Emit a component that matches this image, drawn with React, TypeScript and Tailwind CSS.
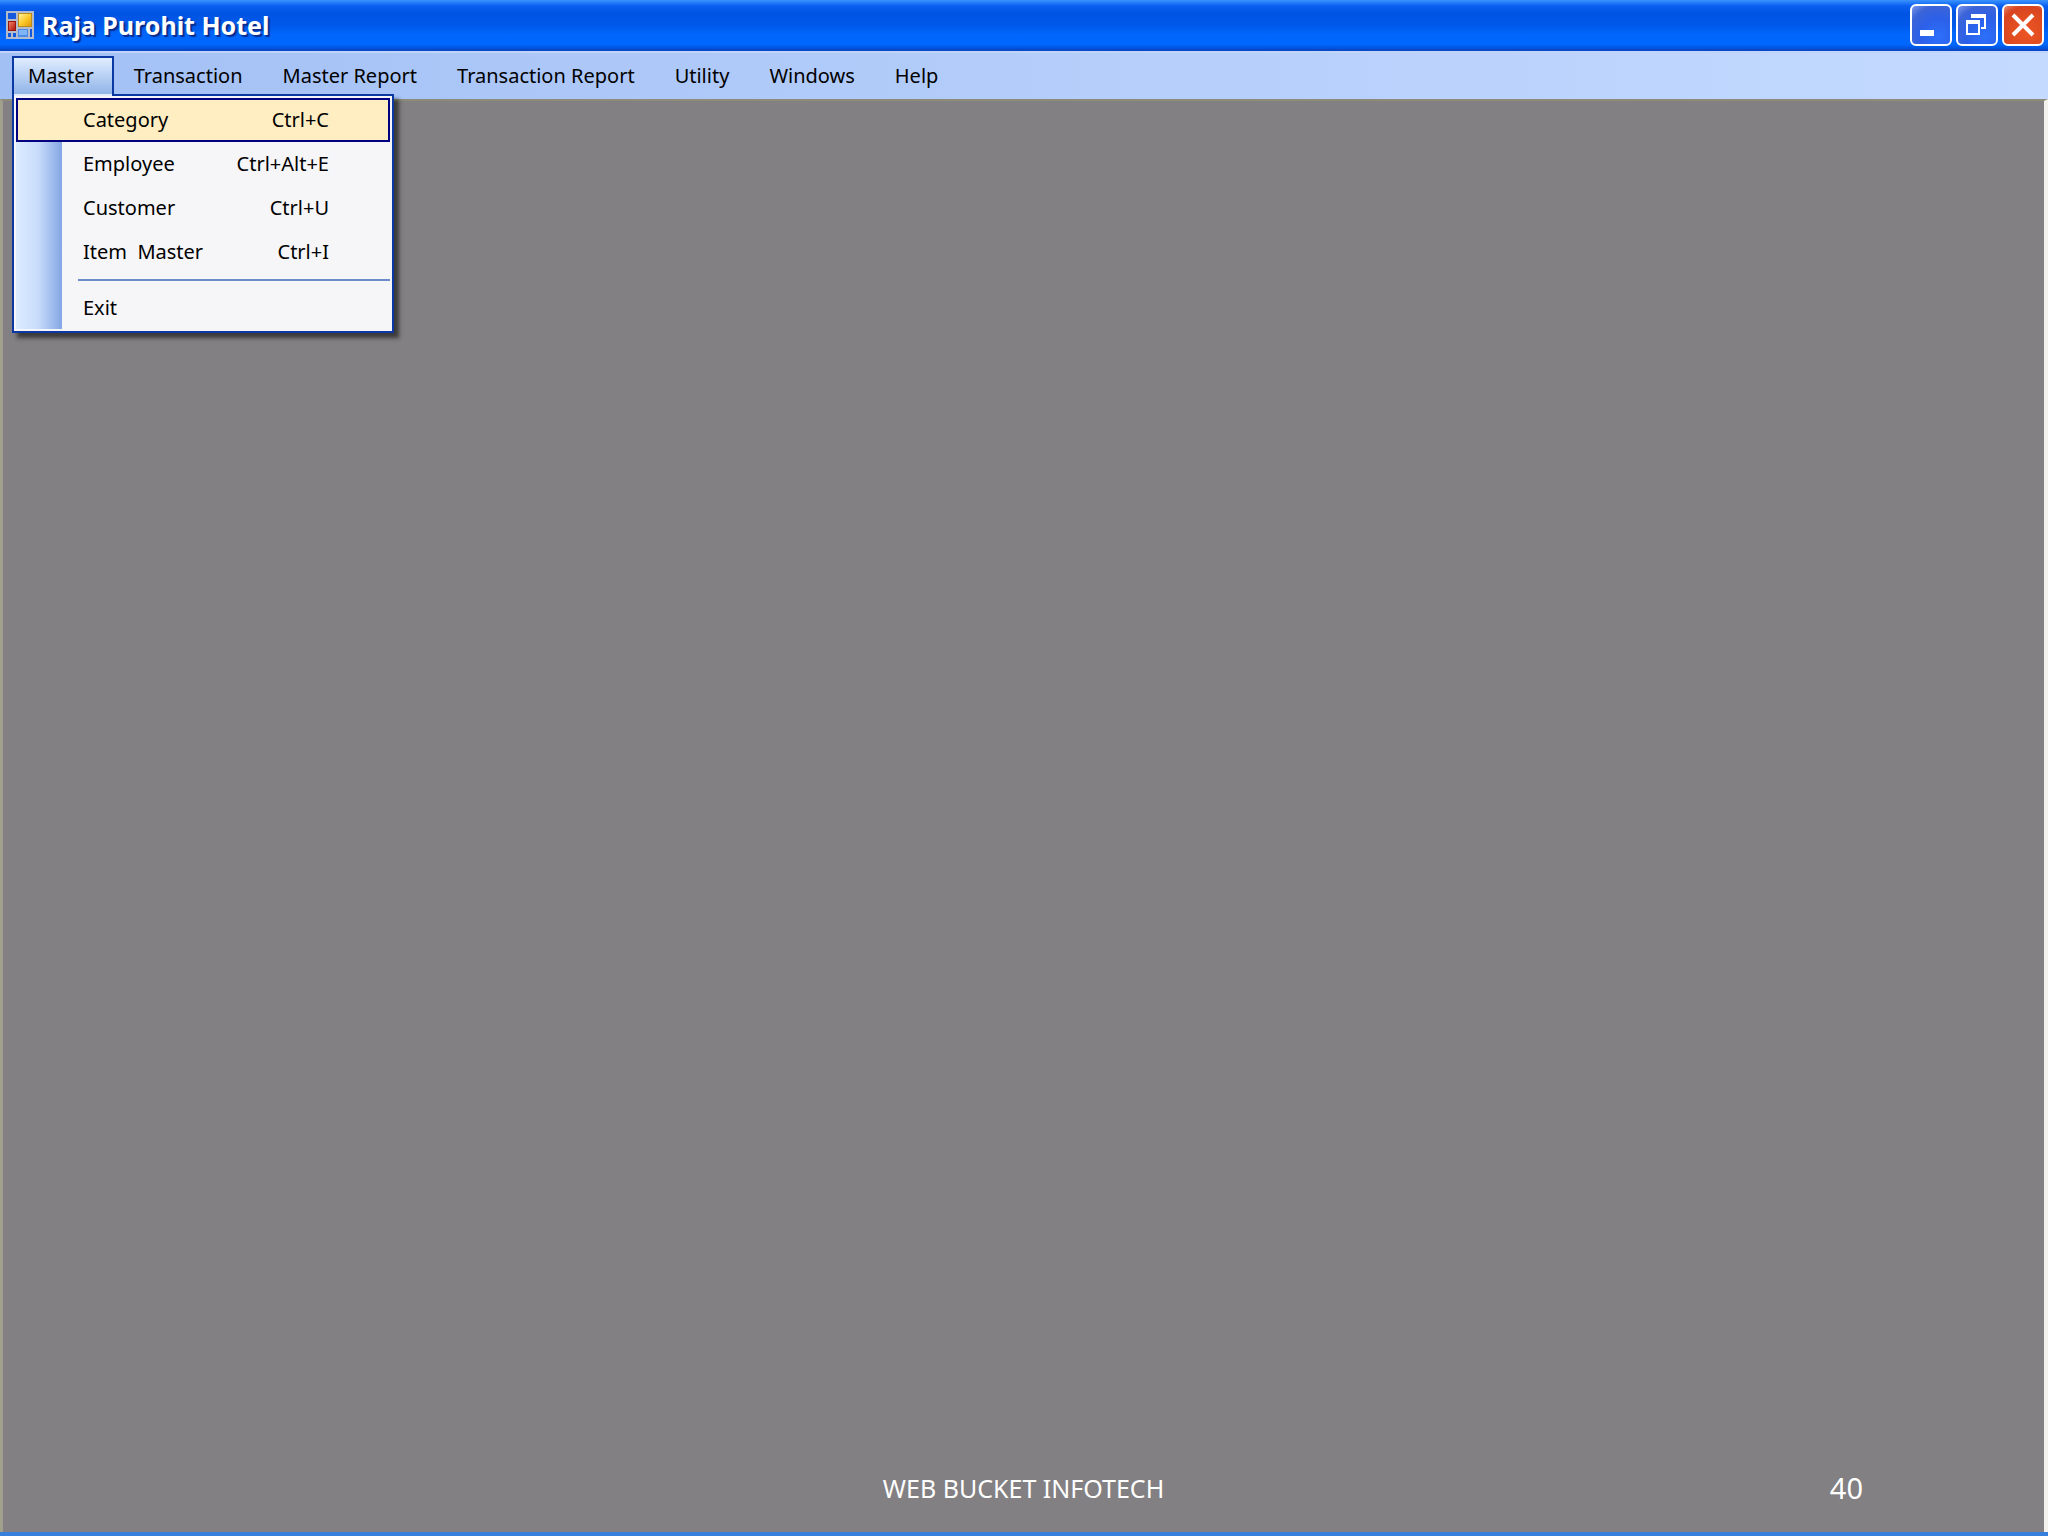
const menus = ["Master", "Transaction", "Master Report", "Transaction Report", "Utility", "Windows", "Help"]

const masterItems = [
  { label: "Category", shortcut: "Ctrl+C" },
  { label: "Employee", shortcut: "Ctrl+Alt+E" },
  { label: "Customer", shortcut: "Ctrl+U" },
  { label: "Item  Master", shortcut: "Ctrl+I" },
]

const AppIcon = () => (
  <svg width="28" height="28" viewBox="0 0 28 28" aria-hidden="true">
    <defs>
      <linearGradient id="yellow" x1="0" y1="0" x2="1" y2="1">
        <stop offset="0" stopColor="#fff3a0" />
        <stop offset="0.5" stopColor="#fcca2c" />
        <stop offset="1" stopColor="#e09a08" />
      </linearGradient>
      <linearGradient id="red" x1="0" y1="0" x2="1" y2="1">
        <stop offset="0" stopColor="#f08068" />
        <stop offset="1" stopColor="#b01408" />
      </linearGradient>
    </defs>
    <rect width="28" height="28" fill="#b4bccc" />
    <rect x="2" y="2" width="8" height="6" fill="#1458dc" />
    <rect x="12" y="2" width="14" height="14" fill="#b98a1c" />
    <rect x="13" y="3" width="12" height="12" fill="url(#yellow)" />
    <rect x="2" y="10" width="8" height="10" fill="#9c1410" />
    <rect x="3" y="11" width="6" height="8" fill="url(#red)" />
    <rect x="2" y="22" width="3" height="4" fill="#1458dc" />
    <rect x="7" y="22" width="3" height="4" fill="#1458dc" />
    <rect x="12" y="18" width="10" height="8" fill="#4c8ae8" />
    <rect x="13" y="19" width="8" height="5" fill="#80b4f8" />
    <rect x="24" y="18" width="2" height="8" fill="#1458dc" />
  </svg>
)

const captionButton =
  "flex h-[42px] w-[42px] items-center justify-center rounded-[6px] border-2 border-white"

const TitleBar = () => (
  <header className="flex h-[51px] items-center justify-between border-b-2 border-[#0a48c8] bg-[linear-gradient(180deg,#3c94ff_0%,#0a5ff0_12%,#0054e3_28%,#0058ea_50%,#0066fc_70%,#0068ff_90%,#0050d8_100%)] pr-1 pl-[6px]">
    <div className="flex items-center gap-[8px]">
      <AppIcon />
      <h1 className="text-[25px] leading-[32px] font-bold text-white [text-shadow:2px_2px_1px_#0a2c8c]">
        Raja Purohit Hotel
      </h1>
    </div>
    <div className="flex gap-1">
      <button
        aria-label="Minimize"
        className={`${captionButton} bg-[radial-gradient(circle_at_70%_80%,#2c70fc_0%,#2c60e8_45%,#3c64d8_75%,#7c98ec_100%)]`}
      >
        <svg width="38" height="38" viewBox="0 0 38 38">
          <rect x="8" y="24" width="14" height="6" fill="#fff" />
        </svg>
      </button>
      <button
        aria-label="Restore"
        className={`${captionButton} bg-[radial-gradient(circle_at_70%_80%,#2c70fc_0%,#2c60e8_45%,#3c64d8_75%,#7c98ec_100%)]`}
      >
        <svg width="38" height="38" viewBox="0 0 38 38" fill="none" stroke="#fff" strokeWidth="2">
          <path d="M14 12V9M27 9V22H23" />
          <path d="M13 10H28" strokeWidth="4" />
          <path d="M9 16V28H21V16" />
          <path d="M8 16H22" strokeWidth="4" />
        </svg>
      </button>
      <button
        aria-label="Close"
        className={`${captionButton} bg-[radial-gradient(circle_at_60%_70%,#ec5424_0%,#e04c20_50%,#d84420_75%,#e88c70_100%)]`}
      >
        <svg width="38" height="38" viewBox="0 0 38 38" stroke="#fff" strokeWidth="4">
          <path d="M9 9L29 29M29 9L9 29" />
        </svg>
      </button>
    </div>
  </header>
)

const MasterMenu = () => (
  <div
    role="menu"
    className="absolute top-[36px] -left-[2px] z-10 w-[382px] border-2 border-[#0c38a4] bg-[#f6f6f8] p-[2px] shadow-[5px_5px_4px_rgba(0,0,0,0.55)]"
  >
    <div className="bg-[linear-gradient(90deg,#dcebff_0px,#c8dcfa_22px,#84a6e4_46px,#f6f6f8_46px)]">
      {masterItems.map((item, index) => (
        <button
          key={item.label}
          role="menuitem"
          className={
            index === 0
              ? "flex h-11 w-full items-center justify-between border-2 border-[#000080] bg-[#ffeec2] pr-[59px] pl-[65px] whitespace-pre"
              : "flex h-11 w-full items-center justify-between pr-[61px] pl-[67px] whitespace-pre"
          }
        >
          <span>{item.label}</span>
          <span>{item.shortcut}</span>
        </button>
      ))}
      <div className="bg-[#f6f6f8] bg-[linear-gradient(90deg,#dcebff_0px,#c8dcfa_22px,#84a6e4_46px,#f6f6f8_46px)] py-[5px] pl-[62px]">
        <div role="separator" className="h-[2px] bg-[#6a8ccb]" />
      </div>
      <button role="menuitem" className="flex h-[43px] w-full items-center pl-[67px]">
        Exit
      </button>
    </div>
  </div>
)

const MenuBar = () => (
  <nav className="flex h-12 items-start border-t-2 border-[#c0d4f8] bg-[linear-gradient(90deg,#a3c0f5_0%,#c4daff_100%)] pt-[3px] pl-3 text-[20px] leading-[28px] text-black">
    {menus.map((name, index) =>
      index === 0 ? (
        <div
          key={name}
          className="relative h-[39px] border-2 border-b-0 border-[#0c38a4] bg-[linear-gradient(180deg,#e0edff_0%,#8fb2e8_100%)]"
        >
          <button className="h-[35px] pr-[18px] pl-[14px]">{name}</button>
          <MasterMenu />
          {/* hides the menu's top edge under the open tab */}
          <div className="absolute top-[36px] right-0 left-0 z-20 h-[2px] bg-[#e4ecfa]" />
        </div>
      ) : (
        <button key={name} className="h-[39px] px-5">
          {name}
        </button>
      )
    )}
  </nav>
)

export default function App() {
  return (
    <div className="flex min-h-screen flex-col border-b-4 border-[#3480dc] bg-[#828082] font-['Noto_Sans','Open_Sans',sans-serif]">
      <TitleBar />
      <MenuBar />
      <main className="flex flex-1 flex-col justify-end border-t-2 border-r-4 border-l-[3px] border-t-[#8c8c78] border-r-[#f4f2ec] border-l-[#a0a08c]">
        <footer className="grid grid-cols-3 items-center pb-[26px] text-white">
          <p className="col-start-2 text-center text-[25px] leading-[36px]">WEB BUCKET INFOTECH</p>
          <p className="pr-[181px] text-right text-[29px] leading-[36px]">40</p>
        </footer>
      </main>
    </div>
  )
}
